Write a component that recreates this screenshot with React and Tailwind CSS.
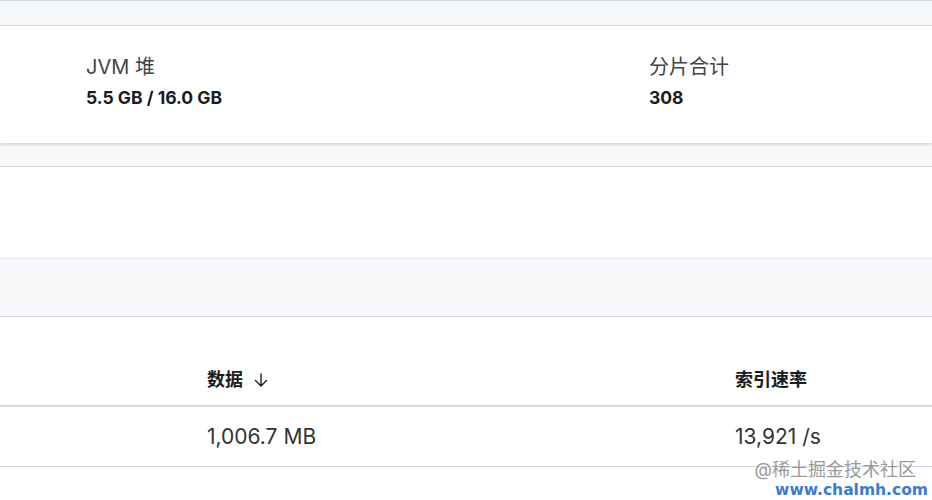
export default function App() {
  const font = { fontFamily: 'Inter, "Noto Sans CJK SC", sans-serif' };
  return (
    <div className="relative w-[932px] h-[500px] overflow-hidden bg-white text-[#1a1c21]" style={font}>
      <div className="h-[25px] bg-[#f7f8fa] border-t border-[#d3dae6]" />
      <div className="h-[118px] bg-white border-t border-[#d3dae6] shadow-[0_2px_2px_rgba(0,0,0,0.12)] relative grid grid-cols-[649px_1fr]">
        <div className="pl-[86px] pt-[29px]">
          <div className="text-[20px] leading-[24px] text-[#444]">JVM 堆</div>
          <div className="text-[17.5px] leading-[20px] font-bold mt-[9px]">5.5 GB / 16.0 GB</div>
        </div>
        <div className="pt-[29px]">
          <div className="text-[20px] leading-[24px] text-[#444]">分片合计</div>
          <div className="text-[17.5px] leading-[20px] font-bold mt-[9px]">308</div>
        </div>
      </div>
      <div className="h-[23px] bg-[#f7f8fa]" />
      <div className="h-[92px] bg-white border-t border-[#d3dae6]" />
      <div className="h-[58px] bg-[#f7f8fa] border-t border-[#e3e8f0]" />
      <div className="border-t border-[#d3dae6]">
        <div className="h-[90px] border-b-2 border-[#d3dae6] grid grid-cols-[207px_528px_1fr] items-end pb-[14px]">
          <div />
          <div className="flex items-center gap-[10px] text-[18px] leading-[22px] font-bold">
            <span>数据</span>
            <svg width="16" height="16" viewBox="0 0 16 16" fill="none" stroke="#1a1c21" strokeWidth="1.4" strokeLinecap="round" strokeLinejoin="round">
              <path d="M8 2v12M2.5 8.5L8 14l5.5-5.5" />
            </svg>
          </div>
          <div className="text-[18px] leading-[22px] font-bold">索引速率</div>
        </div>
        <div className="h-[60px] border-b border-[#d3dae6] grid grid-cols-[207px_528px_1fr] items-center">
          <div />
          <div className="text-[21px] text-[#333]">1,006.7 MB</div>
          <div className="text-[21px] text-[#333]">13,921 /s</div>
        </div>
      </div>
      <div className="absolute right-[4px] bottom-[1px] flex flex-col items-end leading-none">
        <div className="text-[18px] text-[#9a9a9a] leading-[22px] mr-[12px]">@稀土掘金技术社区</div>
        <div className="text-[15.5px] font-bold text-[#3a7bd5] leading-[18px]" style={{ fontFamily: '"DejaVu Sans", sans-serif' }}>www.chalmh.com</div>
      </div>
    </div>
  );
}
